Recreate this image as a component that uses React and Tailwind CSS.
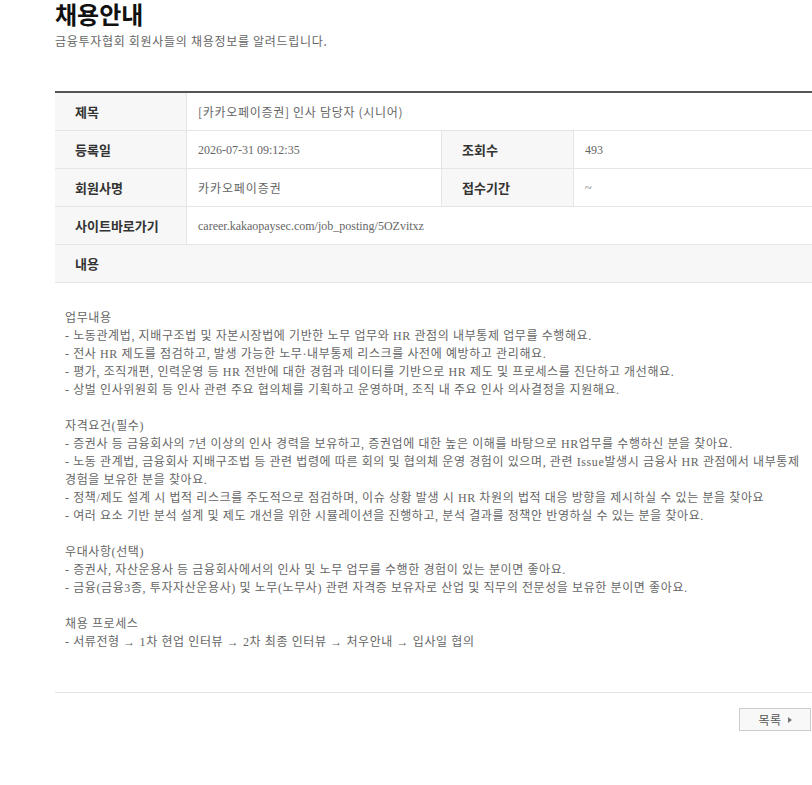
import React from "react";

const sans = { fontFamily: '"Noto Sans CJK KR", "Noto Sans", sans-serif' };
const mixed = { fontFamily: '"Liberation Serif", "Noto Sans CJK KR", serif' };

const content = [
  "업무내용",
  "- 노동관계법, 지배구조법 및 자본시장법에 기반한 노무 업무와 HR 관점의 내부통제 업무를 수행해요.",
  "- 전사 HR 제도를 점검하고, 발생 가능한 노무·내부통제 리스크를 사전에 예방하고 관리해요.",
  "- 평가, 조직개편, 인력운영 등 HR 전반에 대한 경험과 데이터를 기반으로 HR 제도 및 프로세스를 진단하고 개선해요.",
  "- 상벌 인사위원회 등 인사 관련 주요 협의체를 기획하고 운영하며, 조직 내 주요 인사 의사결정을 지원해요.",
  "",
  "자격요건(필수)",
  "- 증권사 등 금융회사의 7년 이상의 인사 경력을 보유하고, 증권업에 대한 높은 이해를 바탕으로 HR업무를 수행하신 분을 찾아요.",
  "- 노동 관계법, 금융회사 지배구조법 등 관련 법령에 따른 회의 및 협의체 운영 경험이 있으며, 관련 Issue발생시 금융사 HR 관점에서 내부통제 경험을 보유한 분을 찾아요.",
  "- 정책/제도 설계 시 법적 리스크를 주도적으로 점검하며, 이슈 상황 발생 시 HR 차원의 법적 대응 방향을 제시하실 수 있는 분을 찾아요",
  "- 여러 요소 기반 분석 설계 및 제도 개선을 위한 시뮬레이션을 진행하고, 분석 결과를 정책안 반영하실 수 있는 분을 찾아요.",
  "",
  "우대사항(선택)",
  "- 증권사, 자산운용사 등 금융회사에서의 인사 및 노무 업무를 수행한 경험이 있는 분이면 좋아요.",
  "- 금융(금융3종, 투자자산운용사) 및 노무(노무사) 관련 자격증 보유자로 산업 및 직무의 전문성을 보유한 분이면 좋아요.",
  "",
  "채용 프로세스",
  "- 서류전형 → 1차 현업 인터뷰 → 2차 최종 인터뷰 → 처우안내 → 입사일 협의",
];

function Label({ children }) {
  return (
    <div
      className="w-[132px] shrink-0 bg-[#f7f7f7] border-r border-[#e5e5e5] pl-5 flex items-center text-[13px] font-bold text-[#333]"
      style={sans}
    >
      {children}
    </div>
  );
}

function Value({ children, className = "", style = mixed }) {
  return (
    <div className={`pl-[11px] flex items-center text-[12px] text-[#666] ${className}`} style={style}>
      {children}
    </div>
  );
}

export default function App() {
  return (
    <div className="min-h-screen bg-white" style={sans}>
      <div className="ml-[55px] w-[757px]">
        <h2 className="mt-[1px] text-[24px] font-bold leading-[26px] text-[#111]">채용안내</h2>
        <p className="mt-[6px] text-[12px] leading-[16px] tracking-[0.7px] text-[#666]">
          금융투자협회 회원사들의 채용정보를 알려드립니다.
        </p>

        {/* 상세 정보 */}
        <div className="mt-[42px] border-t-2 border-[#555]">
          <div className="flex h-[38px] border-b border-[#e5e5e5]">
            <Label>제목</Label>
            <Value style={sans} className="tracking-[0.7px]">[카카오페이증권] 인사 담당자 (시니어)</Value>
          </div>
          <div className="flex h-[38px] border-b border-[#e5e5e5]">
            <Label>등록일</Label>
            <Value className="w-[255px] border-r border-[#e5e5e5]">2026-07-31 09:12:35</Value>
            <Label>조회수</Label>
            <Value>493</Value>
          </div>
          <div className="flex h-[38px] border-b border-[#e5e5e5]">
            <Label>회원사명</Label>
            <Value className="w-[255px] border-r border-[#e5e5e5] tracking-[0.9px]" style={sans}>카카오페이증권</Value>
            <Label>접수기간</Label>
            <Value>~</Value>
          </div>
          <div className="flex h-[38px] border-b border-[#e5e5e5]">
            <Label>사이트바로가기</Label>
            <Value>career.kakaopaysec.com/job_posting/5OZvitxz</Value>
          </div>
          <div className="flex h-[38px] items-center border-b border-[#e5e5e5] bg-[#f7f7f7] pl-5 text-[13px] font-bold text-[#333]">
            내용
          </div>

          <div className="border-b border-[#e5e5e5] pl-[10px] pt-[26px] pb-[41px]">
            {content.map((line, i) => (
              <p
                key={i}
                className="min-h-[18px] break-keep text-[12px] leading-[18px] tracking-[0.6px] text-[#666]"
                style={mixed}
              >
                {line}
              </p>
            ))}
          </div>
        </div>

        <div className="mt-[15px] flex justify-end pr-[1px]">
          <button className="flex h-[23px] w-[72px] items-center justify-center gap-[6px] border border-[#ccc] bg-[#f8f8f8] text-[12px] tracking-[0.5px] text-[#555]">
            목록
            <span className="h-0 w-0 border-y-[3px] border-l-[4px] border-y-transparent border-l-[#777]" />
          </button>
        </div>
      </div>
    </div>
  );
}
